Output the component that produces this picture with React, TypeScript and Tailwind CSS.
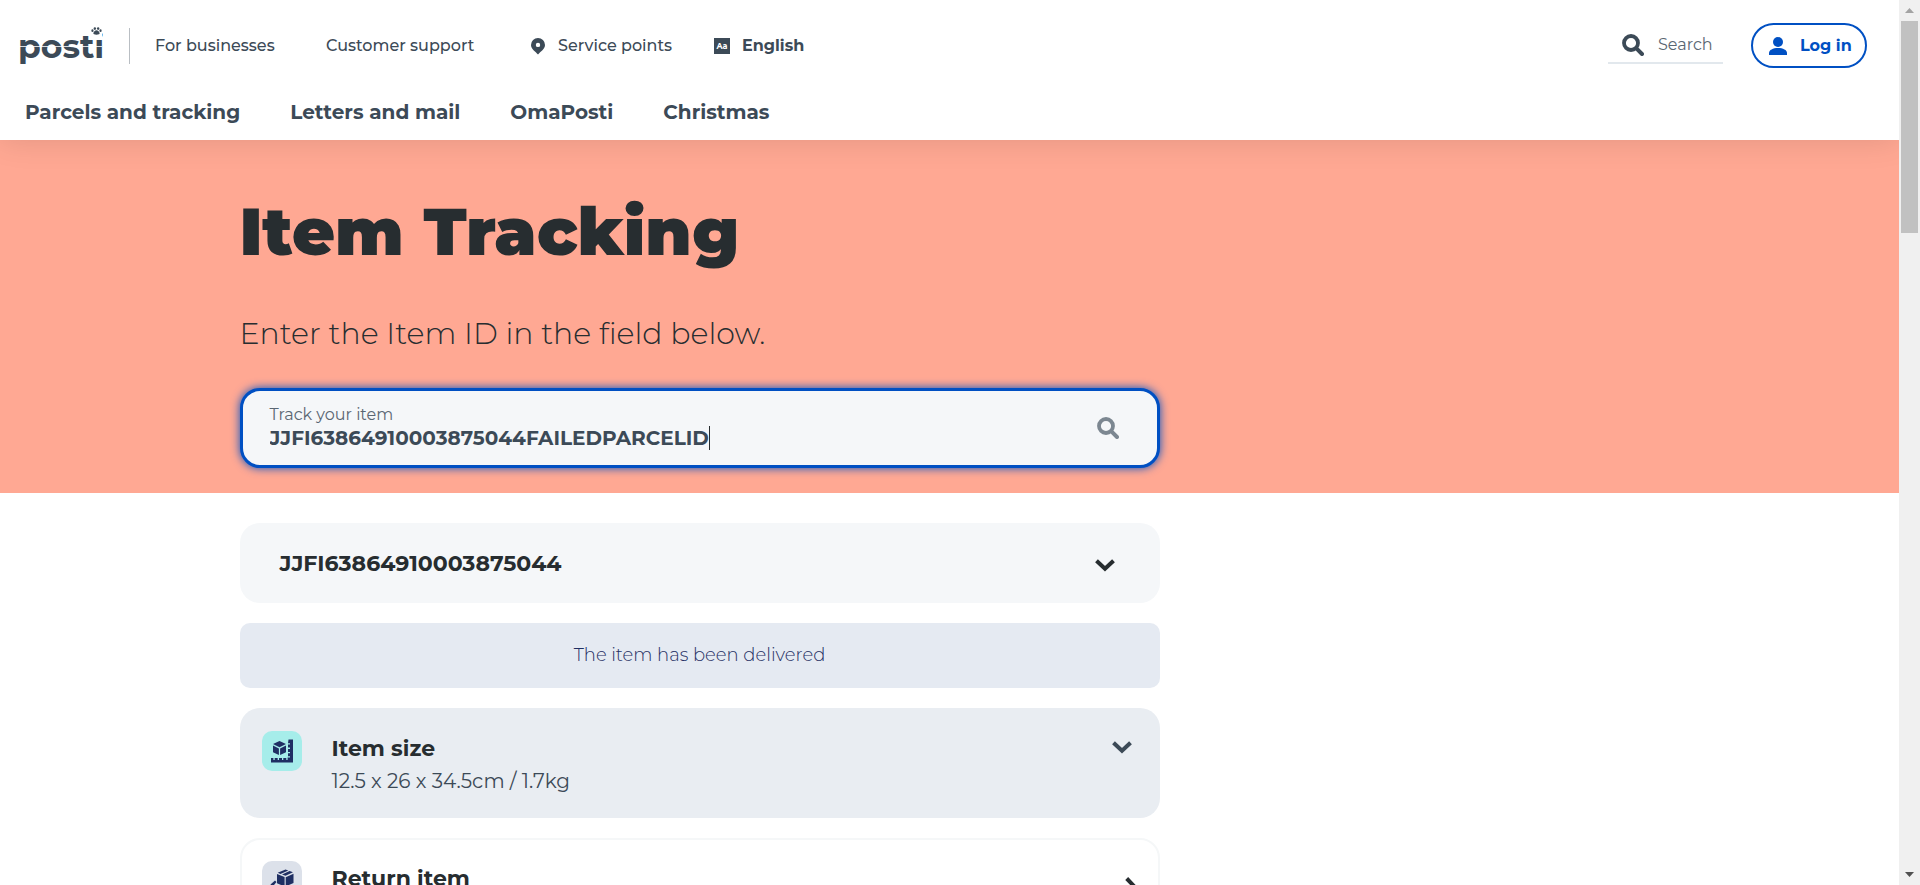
import React from "react";

function SearchIcon({ className }: { className: string }) {
  return (
    <svg viewBox="0 0 22 22" className={className} fill="none" stroke="currentColor" aria-hidden="true">
      <circle cx="9" cy="9" r="7" strokeWidth="3.8" />
      <path d="M14.4 14.4 20 20" strokeWidth="4" strokeLinecap="round" />
    </svg>
  );
}

function Chevron({ className }: { className: string }) {
  return (
    <svg viewBox="0 0 20 13" className={className} fill="none" stroke="currentColor" strokeWidth="4" aria-hidden="true">
      <path d="M1.5 1.7 10 9.8l8.500-8.100" />
    </svg>
  );
}

function Logo() {
  return (
    <a href="#home" aria-label="posti" className="relative flex h-[42px] w-[84px] items-start text-[#3c4a57]">
      <span className="text-[33px] leading-[42px] font-bold">posti</span>
      <span className="absolute inset-x-0 top-[21px] h-px bg-white/80" />
      <svg viewBox="0 0 12 12" className="absolute top-[2px] right-0 h-[11px] w-[11px] bg-white" fill="currentColor" aria-hidden="true">
        <ellipse cx="1.600" cy="4" rx="1.200" ry="1.500" />
        <ellipse cx="4.200" cy="1.700" rx="1.300" ry="1.500" />
        <ellipse cx="7.800" cy="1.700" rx="1.300" ry="1.500" />
        <ellipse cx="10.400" cy="4" rx="1.200" ry="1.500" />
        <path d="M6 3.600c1.500 0 3.400 2 3.400 3.300 0 1.200-1.200 1.500-3.400 1.500S2.600 8.100 2.600 6.900C2.600 5.600 4.500 3.600 6 3.600Z" />
      </svg>
    </a>
  );
}

function SizeIcon() {
  return (
    <svg viewBox="0 0 24 24" className="h-6 w-6" aria-hidden="true">
      <path fill="#1f2f63" d="M9.500 2 16 5 9.500 8.300 3 5ZM3 6.400l5.900 3v6.700L3 13.200ZM16 6.400l-5.900 3v6.700l5.900-2.900Z" />
      <path
        fill="#1f2f63"
        d="M18.500.5H23V23.500H1V19h2.400v2h1.300v-2h3v2H9v-2h3v2h1.300v-2h3v2h1.300v-2.500h2.400v-1.300h-2v-3h2v-1.300h-2v-3h2V8.600h-2v-3h2V4.300h-2Z"
      />
    </svg>
  );
}

function ReturnIcon() {
  return (
    <svg viewBox="0 0 24 24" className="h-6 w-6" fill="#1f2f63" aria-hidden="true">
      <path d="M15.500.500l2.800 1L10.500 5 7.700 3.800ZM19.600 2l3.400 1.300L15.500 6.800 12 5.500ZM7 5l7.600 3v9.500L7 14.300ZM23.500 4.700v9.200l-7.800 3.600V8.200Z" />
      <path d="M.5 15.500 5 11.500l1.500 1.500L4 16l4 2v3L2.500 18.500Z" />
    </svg>
  );
}

function Scrollbar() {
  return (
    <div aria-hidden="true" className="flex w-[21px] shrink-0 flex-col items-center bg-[#f0f0f0]">
      <div className="flex h-[21px] items-center">
        <svg viewBox="0 0 9 5" className="h-[5px] w-[9px]"><path d="M0 5 4.500 0 9 5Z" fill="#a3a3a3" /></svg>
      </div>
      <div className="h-[24%] w-[17px] bg-[#c1c1c1]" />
      <div className="mt-auto flex h-[21px] items-center">
        <svg viewBox="0 0 9 5" className="h-[5px] w-[9px]"><path d="M0 0 4.500 5 9 0Z" fill="#505050" /></svg>
      </div>
    </div>
  );
}

export default function App() {
  return (
    <div className="flex h-screen bg-white font-['Montserrat','Inter',sans-serif] text-[#3c4a57]">
      <div className="min-w-0 flex-1 overflow-hidden">
        <header className="relative flex h-[140px] flex-col bg-white shadow-[0_0_30px_rgba(0,0,0,0.12)]">
          <div className="flex h-[91px] items-center pr-8 pl-[18px]">
            <Logo />
            <span className="ml-[27px] h-9 w-px bg-[#b9bec3]" />
            <nav aria-label="Services" className="flex items-center pl-[25px] text-[16px] leading-6 font-medium">
              <a href="#businesses" className="w-[171px]">For businesses</a>
              <a href="#support" className="w-[204px]">Customer support</a>
              <a href="#points" className="flex w-[184px] items-center gap-3">
                <svg viewBox="0 0 16 18" className="h-[18px] w-4" fill="currentColor" aria-hidden="true">
                  <path fillRule="evenodd" d="M8 1a7 7 0 0 0-7 7c0 4 4.500 6.500 7 9.500 2.500-3 7-5.500 7-9.500a7 7 0 0 0-7-7Zm0 4.700a2.200 2.200 0 1 1 0 4.400 2.200 2.200 0 0 1 0-4.400Z" />
                </svg>
                Service points
              </a>
              <button type="button" className="flex items-center gap-3 font-bold">
                <span className="flex h-4 w-4 items-center justify-center bg-[#3c4a57] text-[8px] leading-4 font-bold text-white" aria-hidden="true">Aa</span>
                English
              </button>
            </nav>
            <div className="ml-auto flex items-center gap-7">
              <label className="flex h-9 w-[115px] items-center gap-[14px] border-b-2 border-[#e2e8ed] pl-[14px]">
                <SearchIcon className="h-[22px] w-[22px] shrink-0" />
                <input type="text" placeholder="Search" aria-label="Search" className="w-full min-w-0 text-[16px] font-normal outline-none placeholder:text-[#5a6672]" />
              </label>
              <button type="button" className="flex h-[45px] w-[116px] items-center gap-[13px] rounded-full border-2 border-[#0050c3] pl-4 text-[16px] font-bold text-[#0050c3]">
                <svg viewBox="0 0 18 18" className="h-[18px] w-[18px] shrink-0" fill="currentColor" aria-hidden="true">
                  <circle cx="9" cy="5" r="5" />
                  <path d="M0 18v-2c0-3 4-5 9-5s9 2 9 5v2Z" />
                </svg>
                Log in
              </button>
            </div>
          </div>
          <nav aria-label="Main" className="flex gap-[50px] pt-[6px] pl-[25px] text-[20px] leading-[30px] font-bold">
            <a href="#parcels">Parcels and tracking</a>
            <a href="#letters">Letters and mail</a>
            <a href="#omaposti">OmaPosti</a>
            <a href="#christmas">Christmas</a>
          </nav>
        </header>

        <main>
          <section className="bg-[#ffa893] text-[#272d30]">
            <div className="mx-auto max-w-[1420px] pt-[52px] pb-[25px]">
              <h1 className="text-[66px] leading-[80px] font-black">Item Tracking</h1>
              <p className="mt-[42px] text-[30px] leading-[40px] font-light">Enter the Item ID in the field below.</p>
              <form className="mt-[34px] flex h-20 max-w-[920px] items-center rounded-[20px] border-[3px] border-[#0050c3] bg-[#f5f7f9] pr-[38px] pl-[27px] shadow-[0_0_10px_#0050c3]">
                <div className="flex flex-1 flex-col pb-1 text-[#3c4a57]">
                  <label htmlFor="item" className="text-[16px] leading-[23px] font-normal text-[#5a6672]">Track your item</label>
                  <div className="flex items-center">
                    <input id="item" type="text" defaultValue="JJFI63864910003875044FAILEDPARCELID" className="field-sizing-content text-[20px] leading-6 font-bold outline-none" />
                    <span className="h-6 w-px bg-[#272d30]" />
                  </div>
                </div>
                <button type="submit" aria-label="Track" className="text-[#7c8791]">
                  <SearchIcon className="h-[22px] w-[22px]" />
                </button>
              </form>
            </div>
          </section>

          <div className="mx-auto max-w-[1420px] pt-[30px]">
            <div className="flex max-w-[920px] flex-col gap-5">
              <button type="button" className="flex h-20 items-center justify-between rounded-[20px] bg-[#f5f7f9] pr-[45px] pl-10 text-[22px] font-bold text-[#272d30]">
                JJFI63864910003875044
                <Chevron className="mt-1 h-[13px] w-5" />
              </button>
              <p className="rounded-[10px] bg-[#e5eaf2] py-5 text-center text-[18px] leading-[25px] font-light text-[#1f2f63]">The item has been delivered</p>
              <button type="button" className="flex h-[110px] items-start rounded-[20px] bg-[#e9edf2] px-[22px] pt-[23px] text-left">
                <span className="flex h-10 w-10 items-center justify-center rounded-[10px] bg-[#a6edea]"><SizeIcon /></span>
                <span className="ml-[30px] flex flex-1 flex-col pt-px">
                  <span className="text-[22px] leading-[34px] font-bold text-[#272d30]">Item size</span>
                  <span className="text-[20px] leading-[30px] font-normal">12.5 x 26 x 34.5cm / 1.7kg</span>
                </span>
                <Chevron className="mt-[10px] mr-[6px] h-[13px] w-5" />
              </button>
              <a href="#return" className="flex h-[110px] items-start rounded-[20px] border-2 border-[#f5f7f8] px-5 pt-[21px]">
                <span className="flex h-10 w-10 items-center justify-center rounded-[10px] bg-[#dce1ea]"><ReturnIcon /></span>
                <span className="ml-[30px] flex-1 pt-px text-[22px] leading-[34px] font-bold text-[#272d30]">Return item</span>
                <svg viewBox="0 0 13 20" className="mt-4 h-5 w-[13px] text-[#272d30]" fill="none" stroke="currentColor" strokeWidth="4" aria-hidden="true">
                  <path d="M1.700 1.500 9.800 10l-8.100 8.500" />
                </svg>
              </a>
            </div>
          </div>
        </main>
      </div>
      <Scrollbar />
    </div>
  );
}
